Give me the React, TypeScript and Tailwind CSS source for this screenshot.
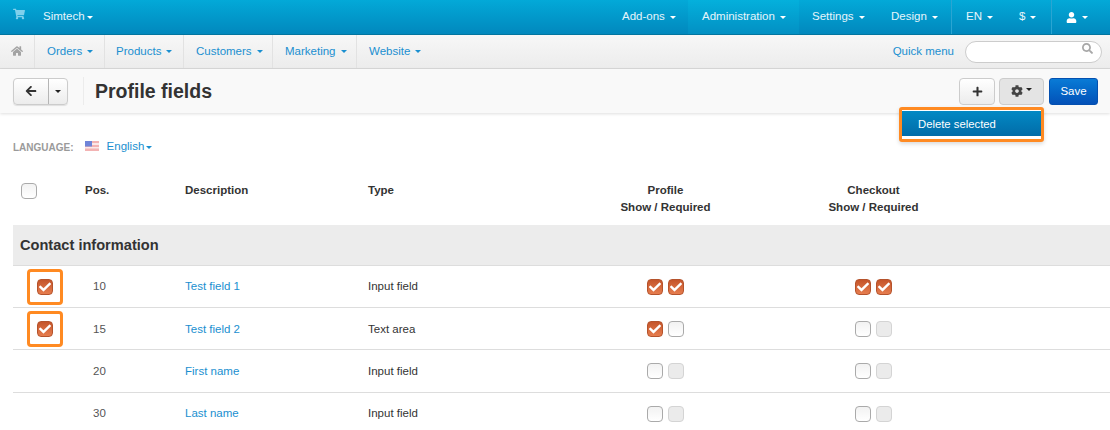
import React from "react";
import { FaShoppingCart, FaHome, FaArrowLeft, FaPlus, FaUser, FaSearch, FaCog, FaCheck } from "react-icons/fa";

const Caret = ({ c = "border-t-white" }: { c?: string }) => (
  <span className={`inline-block w-0 h-0 border-x-[3.5px] border-x-transparent border-t-[3.5px] ${c}`} />
);

type CB = "on" | "off" | "dis";
const Box = ({ s }: { s: CB }) => {
  if (s === "on")
    return (
      <span className="w-4 h-4 rounded-[4px] border border-[#b5532c] bg-gradient-to-b from-[#c4542a] to-[#e67d4e] flex items-center justify-center shrink-0">
        <FaCheck className="text-white text-[12px]" />
      </span>
    );
  if (s === "dis")
    return <span className="block w-4 h-4 rounded-[4px] border border-[#d4d4d4] bg-[#ebebeb] shrink-0" />;
  return <span className="block w-4 h-4 rounded-[4px] border border-[#aaaaaa] bg-gradient-to-b from-[#f2f2f2] to-white shrink-0" />;
};

const Pair = ({ a, b }: { a: CB; b: CB }) => (
  <div className="flex gap-[5px] justify-center">
    <Box s={a} />
    <Box s={b} />
  </div>
);

const rows: { pos: string; name: string; type: string; sel: boolean; p: [CB, CB]; c: [CB, CB]; h: string; t: string }[] = [
  { pos: "10", name: "Test field 1", type: "Input field", sel: true, p: ["on", "on"], c: ["on", "on"], h: "h-[42px]", t: "" },
  { pos: "15", name: "Test field 2", type: "Text area", sel: true, p: ["on", "off"], c: ["off", "dis"], h: "h-[42px]", t: "pt-[2px]" },
  { pos: "20", name: "First name", type: "Input field", sel: false, p: ["off", "dis"], c: ["off", "dis"], h: "h-[43px]", t: "pt-[1px]" },
  { pos: "30", name: "Last name", type: "Input field", sel: false, p: ["off", "dis"], c: ["off", "dis"], h: "h-[42px]", t: "" },
];

const TopItem = ({ t, active, cls = "" }: { t: React.ReactNode; active?: boolean; cls?: string }) => (
  <div className={`h-full shrink-0 flex items-center gap-[5px] whitespace-nowrap text-[#e6f5fb] ${active ? "bg-gradient-to-b from-[#04b0dc] to-[#0390c3]" : ""} ${cls}`}>
    {t}
    <Caret />
  </div>
);

const SubItem = ({ t, w }: { t: string; w: string }) => (
  <div className={`h-full flex items-center gap-[5px] border-r border-[#e2e2e2] text-[#1a8fd0] ${w}`}>
    {t}
    <Caret c="border-t-[#1a8fd0]" />
  </div>
);

export default function App() {
  return (
    <div className="w-[1110px] h-[430px] overflow-hidden relative bg-white text-[11.5px] text-[#333]" style={{ fontFamily: '"Liberation Sans", Arial, sans-serif' }}>
      {/* top bar */}
      <div className="h-[35px] flex items-center bg-gradient-to-b from-[#03a9d8] to-[#0288bd] border-b border-[#02759f]">
        <div className="w-[43px] pl-[13px] pb-[6px] text-[#7fd0ec]"><FaShoppingCart className="text-[12px]" /></div>
        <div className="flex items-center gap-[2px] text-[#e6f5fb]">Simtech<Caret /></div>
        <div className="flex-1" />
        <div className="flex items-center h-full">
          <TopItem t="Add-ons" cls="w-[79px] pl-[13px]" />
          <TopItem t="Administration" active cls="w-[111px] pl-[14px]" />
          <TopItem t="Settings" cls="w-[79px] pl-[13px]" />
          <TopItem t="Design" cls="w-[73px] pl-[13px]" />
          <div className="h-full border-l border-[#2aa5d2]" />
          <TopItem t="EN" cls="w-[53px] pl-[14px]" />
          <TopItem t="$" cls="w-[46px] pl-[14px]" />
          <div className="h-full border-l border-[#2aa5d2]" />
          <TopItem t={<FaUser className="text-[11px] text-white" />} cls="w-[58px] pl-[14px]" />
        </div>
      </div>
      {/* sub nav */}
      <div className="h-[34px] flex items-center bg-gradient-to-b from-[#f7f7f7] to-[#ececec] border-b border-[#d9d9d9]">
        <div className="w-[35px] h-full flex items-center justify-center border-r border-[#e2e2e2] text-[#a3a3a3] pr-[1px] pb-[1px]"><FaHome className="text-[12px]" /></div>
        <SubItem t="Orders" w="w-[70px] pl-[12px]" />
        <SubItem t="Products" w="w-[79px] pl-[11px]" />
        <SubItem t="Customers" w="w-[89px] pl-[12px]" />
        <SubItem t="Marketing" w="w-[84px] pl-[12px]" />
        <div className="flex items-center gap-[5px] pl-[12px] text-[#1a8fd0]">Website<Caret c="border-t-[#1a8fd0]" /></div>
        <div className="flex-1" />
        <div className="text-[#1a8fd0] mr-[11px] mt-[1px]">Quick menu</div>
        <div className="w-[137px] h-[22px] rounded-full border border-[#cccccc] bg-white flex items-start justify-end pr-[8px] pt-[1px] text-[#a8a8a8]">
          <FaSearch className="text-[11px]" />
        </div>
        <div className="w-[8px]" />
      </div>
      {/* toolbar */}
      <div className="h-[44px] flex items-center bg-[#f9f9f9] shadow-[0_1px_3px_rgba(0,0,0,0.13)] pl-[13px] pr-[12px]">
        <div className="flex h-[27px] rounded-[4px] border border-[#cccccc] bg-gradient-to-b from-white to-[#ececec] shadow-[0_1px_1px_rgba(0,0,0,0.1)]">
          <div className="w-[35px] flex items-center justify-center border-r border-[#b5b5b5] text-[#333]"><FaArrowLeft className="text-[12px]" /></div>
          <div className="w-[18px] flex items-center justify-center"><Caret c="border-t-[#222]" /></div>
        </div>
        <div className="ml-[15px] h-[28px] border-l border-[#ececec]" />
        <h1 className="ml-[11px] mt-[1px] text-[19.5px] font-bold text-[#333] leading-none">Profile fields</h1>
        <div className="flex-1" />
        <div className="w-[36px] h-[27px] rounded-[4px] border border-[#cccccc] bg-gradient-to-b from-white to-[#ececec] flex items-center justify-center text-[#333]"><FaPlus className="text-[11px]" /></div>
        <div className="ml-[4px] w-[45px] h-[27px] rounded-[4px] border border-[#cccccc] bg-[#e4e4e4] flex items-center justify-center gap-[3px] text-[#444]">
          <FaCog className="text-[12px]" />
          <span className="mb-[4px] flex"><Caret c="border-t-[#222]" /></span>
        </div>
        <div className="ml-[5px] w-[49px] h-[27px] rounded-[3px] bg-gradient-to-b from-[#0a7bd6] to-[#0451b8] border border-[#0450b0] flex items-center justify-center pt-[1px] text-white">Save</div>
      </div>
      {/* language */}
      <div className="flex items-center h-[20px] mt-[24px] pl-[13px]">
        <span className="text-[10px] font-bold text-[#9a9a9a]">LANGUAGE:</span>
        <svg width="14" height="10" viewBox="0 0 14 10" className="ml-[11px] mr-[8px] mb-[3px]">
          <rect width="14" height="10" fill="#f3b3b3" />
          <rect y="2" width="14" height="2" fill="#fbe8e8" />
          <rect y="6" width="14" height="1.5" fill="#fbe8e8" />
          <rect width="7" height="5.5" fill="#6f84d8" />
        </svg>
        <span className="text-[#1a8fd0] flex items-center gap-[2px]">English<Caret c="border-t-[#1a8fd0]" /></span>
      </div>
      {/* table */}
      <div className="ml-[13px] w-[1097px]">
        <div className="h-[63px] mt-[5px] grid grid-cols-[72px_100px_183px_200px_195px_221px_1fr] items-start font-bold text-[#333] leading-[17px] pt-[20px]">
          <div className="pl-[8px] pt-[1px]"><Box s="off" /></div>
          <div>Pos.</div>
          <div>Description</div>
          <div>Type</div>
          <div className="text-center">Profile<br />Show / Required</div>
          <div className="text-center">Checkout<br />Show / Required</div>
        </div>
        <div className="h-[41px] flex items-center bg-[#ececec] border-b border-[#dddddd] pl-[7px] pt-[1px] text-[14.6px] font-bold text-[#333]">Contact information</div>
        {rows.map((r) => (
          <div key={r.pos} className={`grid grid-cols-[72px_100px_183px_200px_195px_221px_1fr] items-center border-b border-[#dddddd] ${r.h}`}>
            <div className="pl-[24px]">{r.sel && <Box s="on" />}</div>
            <div className={`pl-[8px] text-[#555] ${r.t}`}>{r.pos}</div>
            <div className={`text-[#1a8fd0] ${r.t}`}>{r.name}</div>
            <div className={`text-[#333] ${r.t}`}>{r.type}</div>
            <Pair a={r.p[0]} b={r.p[1]} />
            <Pair a={r.c[0]} b={r.c[1]} />
          </div>
        ))}
      </div>
      {/* highlights */}
      <div className="absolute left-[27px] top-[269px] w-[36px] h-[36px] rounded-[4px] border-[3px] border-[#ff8a22]" />
      <div className="absolute left-[27px] top-[311px] w-[36px] h-[36px] rounded-[4px] border-[3px] border-[#ff8a22]" />
      <div className="absolute left-[899px] top-[107px] w-[145px] h-[35px] rounded-[3px] border-[3px] border-[#ff8a22] bg-white shadow-[0_2px_4px_rgba(0,0,0,0.15)] overflow-hidden">
        <div className="h-[25px] mt-[1px] pt-[1px] bg-gradient-to-b from-[#0389c4] to-[#026ca8] flex items-center pl-[16px] text-[11.3px] text-white">Delete selected</div>
      </div>
    </div>
  );
}
